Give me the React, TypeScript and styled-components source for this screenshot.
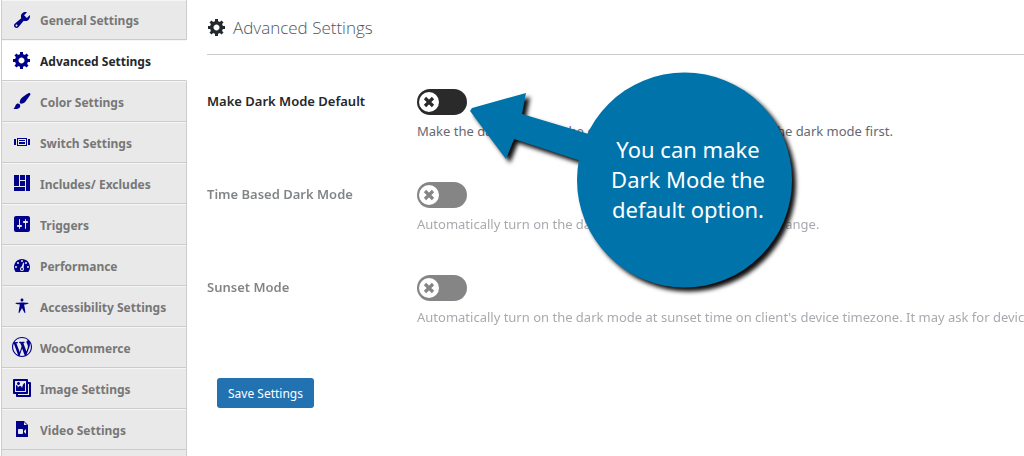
import React from "react";
import styled, { createGlobalStyle, css } from "styled-components";

const Global = createGlobalStyle`
  *, *::before, *::after { box-sizing: border-box; }
  body {
    margin: 0;
    background: #fff;
    color: #1d2327;
    font-family: "Noto Sans", "Open Sans", sans-serif;
    font-size: 13px;
  }
`;

const icons = {
  tools:
    "M16.68 9.77c-1.34 1.34-3.3 1.67-4.95.99l-5.41 6.52c-.99.99-2.59.99-3.58 0s-.99-2.59 0-3.57l6.52-5.42c-.68-1.65-.35-3.61.99-4.95 1.28-1.28 3.12-1.62 4.72-1.06l-2.89 2.89 2.82 2.82 2.86-2.87c.53 1.58.18 3.39-1.08 4.65zM3.81 16.21c.4.39 1.04.39 1.43 0 .4-.4.4-1.04 0-1.43-.39-.4-1.03-.4-1.43 0-.39.39-.39 1.03 0 1.43z",
  gear:
    "M18 12h-2.18c-.17.7-.44 1.35-.81 1.93l1.54 1.54-2.1 2.1-1.54-1.54c-.58.36-1.23.63-1.91.79V19H8v-2.18c-.68-.16-1.33-.43-1.91-.79l-1.54 1.54-2.12-2.12 1.54-1.54c-.36-.58-.63-1.23-.79-1.91H1V9.03h2.17c.16-.7.44-1.35.8-1.94L2.43 5.55l2.1-2.1 1.54 1.54c.58-.37 1.24-.64 1.93-.81V2h3v2.18c.68.16 1.33.43 1.91.79l1.54-1.54 2.12 2.12-1.54 1.54c.36.59.64 1.24.8 1.94H18V12zm-8.5 1.5c1.66 0 3-1.34 3-3s-1.34-3-3-3-3 1.34-3 3 1.34 3 3 3z",
  brush:
    "M18.33 3.57s.27-.8-.31-1.36c-.53-.52-1.22-.24-1.22-.24-.61.3-5.76 3.47-7.67 5.57-.86.96-2.06 3.79-1.09 4.82.92.98 3.96-.17 4.79-1 2.06-2.06 5.21-7.17 5.5-7.79zM1.4 17.65c2.37-1.56 1.46-3.41 3.23-4.64.93-.65 2.22-.62 3.08.29.63.67.8 2.57-.16 3.46-1.57 1.45-4 1.55-6.15.89z",
  slides:
    "M5 14V6h10v8H5zm-3-1V7h2v6H2zm4-6v6h8V7H6zm10 0h2v6h-2V7zm-3 2V8H7v1h6zm0 3v-2H7v2h6z",
  layout:
    "M2 2h5v11H2V2zm6 0h5v5H8V2zm6 0h4v16h-4V2zM8 8h5v5H8V8zm-6 6h11v4H2v-4z",
  sliders:
    "M18 16V4c0-1.1-.9-2-2-2H4c-1.1 0-2 .9-2 2v12c0 1.1.9 2 2 2h12c1.1 0 2-.9 2-2zM8 11h1c.55 0 1 .45 1 1s-.45 1-1 1H8v1.5c0 .28-.22.5-.5.5s-.5-.22-.5-.5V13H6c-.55 0-1-.45-1-1s.45-1 1-1h1V5.5c0-.28.22-.5.5-.5s.5.22.5.5V11zm5-2h-1c-.55 0-1-.45-1-1s.45-1 1-1h1V5.5c0-.28.22-.5.5-.5s.5.22.5.5V7h1c.55 0 1 .45 1 1s-.45 1-1 1h-1v5.5c0 .28-.22.5-.5.5s-.5-.22-.5-.5V9z",
  dashboard:
    "M3.76 17h12.48c1.1-1.37 1.76-3.11 1.76-5 0-4.42-3.58-8-8-8s-8 3.58-8 8c0 1.89.66 3.63 1.76 5zM9 6a1 1 0 1 1 2 0 1 1 0 1 1-2 0zM5 8a1 1 0 1 1 2 0 1 1 0 1 1-2 0zM13 8a1 1 0 1 1 2 0 1 1 0 1 1-2 0zM3 12a1 1 0 1 1 2 0 1 1 0 1 1-2 0zM15 12a1 1 0 1 1 2 0 1 1 0 1 1-2 0zM11.3 7.6l.9.3-.6 4.7c.3.4.4.9.4 1.4a2 2 0 1 1-2.6-1.9zM10 13a1 1 0 1 0 0 2 1 1 0 0 0 0-2z",
  person:
    "M10 2.6c.83 0 1.5.67 1.5 1.5s-.67 1.51-1.5 1.51c-.82 0-1.5-.68-1.5-1.51s.68-1.5 1.5-1.5zM3.4 7.36c0-.65 6.6-.76 6.6-.76s6.6.11 6.6.76-4.47 1.4-4.47 1.4 1.69 8.14 1.06 8.38c-.62.24-3.19-5.19-3.19-5.19s-2.56 5.43-3.18 5.19c-.63-.24 1.06-8.38 1.06-8.38S3.4 8.01 3.4 7.36z",
  wordpress:
    "M20 10c0-5.51-4.49-10-10-10C4.48 0 0 4.49 0 10c0 5.52 4.48 10 10 10 5.51 0 10-4.48 10-10zM7.78 15.37L4.37 6.22c.55-.02 1.17-.08 1.17-.08.5-.06.44-1.13-.06-1.11 0 0-1.45.11-2.37.11-.18 0-.37 0-.58-.01C4.12 2.69 6.87 1.11 10 1.11c2.33 0 4.45.87 6.05 2.34-.68-.11-1.65.39-1.65 1.58 0 .74.45 1.36.9 2.1.35.61.55 1.36.55 2.46 0 1.49-1.4 5-1.4 5l-3.03-8.37c.54-.02.82-.17.82-.17.5-.05.44-1.25-.06-1.22 0 0-1.44.12-2.38.12-.87 0-2.33-.12-2.33-.12-.5-.03-.56 1.2-.06 1.22l.92.08 1.26 3.41zM17.41 10c.24-.64.74-1.87.43-4.25.7 1.29 1.05 2.71 1.05 4.25 0 3.29-1.73 6.24-4.4 7.78.97-2.59 1.94-5.2 2.92-7.78zM6.1 18.09C3.12 16.65 1.11 13.53 1.11 10c0-1.3.23-2.48.72-3.59C3.25 10.3 4.67 14.2 6.1 18.09zm4.03-6.63l2.58 6.98c-.86.29-1.76.45-2.71.45-.79 0-1.57-.11-2.29-.33.81-2.38 1.62-4.74 2.42-7.1z",
  gallery:
    "M16 4h1.96c.57 0 1.04.47 1.04 1.04v12.92c0 .57-.47 1.04-1.04 1.04H5.04C4.47 19 4 18.53 4 17.96V16H2.04C1.47 16 1 15.53 1 14.96V2.04C1 1.47 1.47 1 2.04 1h12.92c.57 0 1.04.47 1.04 1.04V4zM3 14h11V3H3v11zm5-8.5C8 4.67 7.33 4 6.5 4S5 4.67 5 5.5 5.67 7 6.5 7 8 6.33 8 5.5zm2 4.5s1-5 3-5v8H4V7c2 0 2 3 2 3s.33-2 2-2 2 2 2 2zm7 7V6h-1v8.96c0 .57-.47 1.04-1.04 1.04H6v1h11z",
  video:
    "M12 2l4 4v12H4V2h8zm0 4h3l-3-3v3zm-1 8v-3c0-.27-.1-.51-.29-.71-.2-.19-.44-.29-.71-.29H7c-.27 0-.51.1-.71.29-.19.2-.29.44-.29.71v3c0 .27.1.51.29.71.2.19.44.29.71.29h3c.27 0 .51-.1.71-.29.19-.2.29-.44.29-.71zm3 1v-5l-2 2v1z",
};

type IconName = keyof typeof icons;

const IconSvg = styled.svg`
  flex: none;
  width: 20px;
  height: 20px;
  fill: currentColor;
`;

const Icon = ({ name }: { name: IconName }) => (
  <IconSvg viewBox="0 0 20 20" fillRule="evenodd" aria-hidden="true">
    <path d={icons[name]} />
  </IconSvg>
);

const Page = styled.div`
  position: relative;
  display: flex;
  min-height: 100vh;
  overflow: hidden;
`;

const Sidebar = styled.nav`
  flex: none;
  width: 186px;
  margin-left: 1px;
  background: #e9e9e9;
  box-shadow: inset 1px 0 #ccc, inset -1px 0 #ccc;
`;

const Tab = styled.a<{ $active?: boolean }>`
  display: flex;
  align-items: center;
  gap: 8px;
  height: 41px;
  padding: 0 10px;
  border: solid #ccc;
  border-width: 0 1px 1px;
  box-shadow: inset 0 1px #f6f6f6;
  color: #777;
  font-size: 12px;
  font-weight: 700;
  text-decoration: none;
  white-space: nowrap;

  &:first-child { height: 40px; }

  ${(p) =>
    p.$active &&
    css`
      background: #fff;
      border-right-color: #fff;
      color: #23282d;
    `}

  ${IconSvg} { color: #00008b; }
`;

const TabText = styled.span`
  padding-top: 2px;
`;

const Panel = styled.main`
  flex: 1;
  min-width: 0;
  padding-left: 20px;
  overflow: hidden;
`;

const Title = styled.h1`
  display: flex;
  align-items: center;
  gap: 6px;
  height: 55px;
  margin: 0;
  border-bottom: 1px solid #ccc;
  color: #23282d;
  font-family: "Open Sans", sans-serif;
  font-size: 17px;
  font-weight: 300;
`;

const TitleText = styled.span`
  color: #50565c;
`;

const Rows = styled.div`
  display: grid;
  gap: 38px;
  padding-top: 34px;
`;

const Row = styled.div<{ $off?: boolean }>`
  display: grid;
  grid-template-columns: 210px 1fr;
  opacity: ${(p) => (p.$off ? 0.57 : 1)};
`;

const Label = styled.label`
  color: #23282d;
  font-size: 13px;
  font-weight: 600;
  line-height: 24px;
`;

const Field = styled.div`
  min-width: 0;
`;

const SwitchBox = styled.span`
  display: grid;
  width: 50px;
  height: 26px;
  & > * { grid-area: 1 / 1; }
`;

const Switch = styled.input`
  appearance: none;
  width: 50px;
  height: 26px;
  margin: 0;
  border-radius: 13px;
  background: #2a2a2a;
  cursor: pointer;
`;

const Knob = styled.svg`
  width: 26px;
  height: 26px;
  pointer-events: none;
`;

const Hint = styled.p`
  margin: 3px 0 0;
  color: #646970;
  font-size: 13px;
  line-height: 26px;
  white-space: nowrap;
`;

const Save = styled.button`
  height: 30px;
  margin: 48px 10px 0;
  padding: 0 11px;
  border: 0;
  border-radius: 3px;
  background: #2271b1;
  color: #fff;
  font-family: inherit;
  font-size: 12px;
`;

const Callout = styled.aside`
  position: absolute;
  top: 64px;
  left: 460px;
  width: 350px;
  height: 240px;
  pointer-events: none;
`;

const Bubble = styled.svg`
  display: block;
  width: 100%;
  height: 100%;
  fill: #0073aa;
  filter: drop-shadow(4px 4px 2px rgba(0, 0, 0, 0.95));
`;

const CalloutText = styled.p`
  position: absolute;
  top: 70px;
  left: 120px;
  width: 216px;
  margin: 0;
  color: #fff;
  font-size: 22px;
  line-height: 30px;
  text-align: center;
`;

const tabs: { icon: IconName; text: string }[] = [
  { icon: "tools", text: "General Settings" },
  { icon: "gear", text: "Advanced Settings" },
  { icon: "brush", text: "Color Settings" },
  { icon: "slides", text: "Switch Settings" },
  { icon: "layout", text: "Includes/ Excludes" },
  { icon: "sliders", text: "Triggers" },
  { icon: "dashboard", text: "Performance" },
  { icon: "person", text: "Accessibility Settings" },
  { icon: "wordpress", text: "WooCommerce" },
  { icon: "gallery", text: "Image Settings" },
  { icon: "video", text: "Video Settings" },
];

const options = [
  {
    id: "default-mode",
    label: "Make Dark Mode Default",
    hint: "Make the dark mode as the default mode. Visitors will see the dark mode first.",
  },
  {
    id: "time-based",
    label: "Time Based Dark Mode",
    hint: "Automatically turn on the dark mode between a given time range.",
    off: true,
  },
  {
    id: "sunset",
    label: "Sunset Mode",
    hint: "Automatically turn on the dark mode at sunset time on client's device timezone. It may ask for device location permission.",
    off: true,
  },
];

export default function App() {
  return (
    <>
      <Global />
      <Page>
        <Sidebar aria-label="Settings sections">
          {tabs.map((t) => (
            <Tab
              key={t.text}
              href="#"
              $active={t.icon === "gear"}
              aria-current={t.icon === "gear" ? "page" : undefined}
            >
              <Icon name={t.icon} />
              <TabText>{t.text}</TabText>
            </Tab>
          ))}
        </Sidebar>
        <Panel>
          <Title>
            <Icon name="gear" />
            <TitleText>Advanced Settings</TitleText>
          </Title>
          <Rows>
            {options.map((o) => (
              <Row key={o.id} $off={o.off}>
                <Label htmlFor={o.id}>{o.label}</Label>
                <Field>
                  <SwitchBox>
                    <Switch type="checkbox" role="switch" id={o.id} />
                    <Knob viewBox="0 0 26 26" aria-hidden="true">
                      <circle cx="12" cy="13" r="10" fill="#fff" />
                      <path
                        d="M8 9l8 8M16 9l-8 8"
                        stroke="#2a2a2a"
                        strokeWidth="3.2"
                      />
                    </Knob>
                  </SwitchBox>
                  <Hint>{o.hint}</Hint>
                </Field>
              </Row>
            ))}
          </Rows>
          <Save type="button">Save Settings</Save>
        </Panel>
        <Callout>
          <Bubble viewBox="0 0 350 240" aria-hidden="true">
            <path d="M10 47L12 44L66 29L62 50L132 71L124 98L54 75L46 95Z" />
            <circle cx="224.5" cy="116" r="107.5" />
          </Bubble>
          <CalloutText>
            You can make
            <br />
            Dark Mode the
            <br />
            default option.
          </CalloutText>
        </Callout>
      </Page>
    </>
  );
}
